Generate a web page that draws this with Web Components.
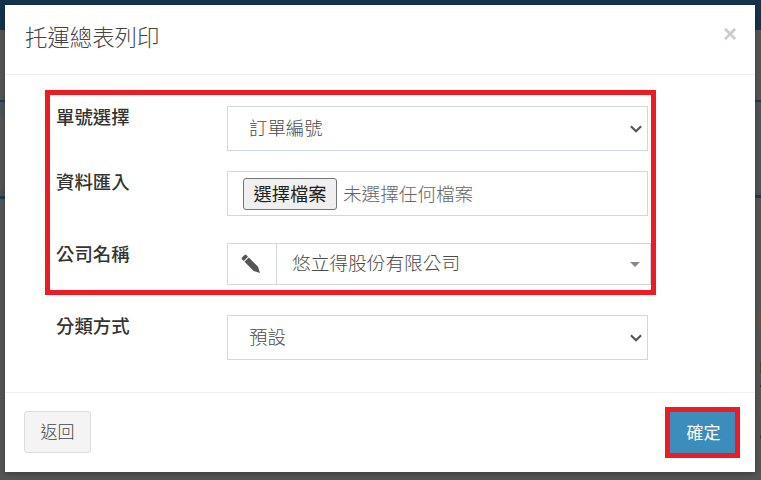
<!DOCTYPE html>
<html lang="zh-Hant"><head><meta charset="utf-8"><title>托運總表列印</title>
<style>
html,body{margin:0;height:100%;overflow:hidden}
body{font-family:"Noto Sans CJK TC","Liberation Sans",sans-serif;color:#333}
.r1{margin-top:20px}
.r2{margin-top:27px}
.r3{margin:20px 0 0 51px}
.first{margin-top:11px}
.back{margin-top:-1px}
</style></head><body>
<page-backdrop></page-backdrop>
<print-modal heading="托運總表列印">
  <red-frame class="main">
    <form-row class="first" label="單號選擇"><select-box>訂單編號</select-box></form-row>
    <form-row class="r1" label="資料匯入"><file-box></file-box></form-row>
    <form-row class="r2" label="公司名稱"><combo-box>悠立得股份有限公司</combo-box></form-row>
  </red-frame>
  <form-row class="r3" label="分類方式"><select-box>預設</select-box></form-row>
  <action-button class="back" slot="left">返回</action-button>
  <red-frame slot="right" style="--m:0;--p:0"><action-button primary>確定</action-button></red-frame>
</print-modal>
<script>
function def(name,css,html){
  customElements.define(name,class extends HTMLElement{
    constructor(){super();const s=this.attachShadow({mode:'open'});
      s.innerHTML='<style>'+css+'</style>'+(typeof html==='function'?html(this):html);}
  });
}
const chev='<svg width="12" height="8" viewBox="0 0 12 8"><path d="M.9 1.300 6 6.300 11.100 1.300" fill="none" stroke="#555" stroke-width="2.100"/></svg>';
def('page-backdrop',`
:host{position:fixed;inset:0;display:flex;background:#565656}
section{display:flex;flex-direction:column}
.lc{width:5px;flex:none}.rc{flex:1;position:relative}
div{flex:none}
.top{height:30px;background:#15344b}.a{height:70px}
.l{height:2px;background:#1c3d52}
.t{background:#4b5558}
.g{background:#515151}
.m{height:3px;background:#1c3d52}
.rest{flex:1}
i{position:absolute;right:0;width:1px}`,
`<section class="lc"><div class="top"></div><div class="a"></div><div class="l"></div><div class="t" style="height:14px"></div><div style="height:73px"></div><div class="g" style="height:7px"></div><div class="m"></div><div class="rest"></div></section>
<section class="rc"><div class="top"></div><div class="a"></div><div class="l"></div><div class="t" style="height:93px"></div><div class="m"></div><div class="rest"></div>
<i style="top:313px;height:12px;background:#6b5528"></i><i style="top:362px;height:11px;background:#4a4330"></i><i style="top:385px;height:2px;background:#333"></i><i style="top:435px;height:4px;background:#4a3d28"></i></section>`);
def('print-modal',`
:host{position:fixed;left:5px;top:5px;width:750px;height:467px;background:#fff;display:flex;flex-direction:column;box-shadow:0 2px 6px rgba(0,0,0,.3)}
header{height:70px;box-sizing:border-box;border-bottom:1px solid #f0f0f0;display:flex;justify-content:space-between;align-items:flex-start;padding:0 18px 0 20px;flex:none}
h1{margin:16px 0 0;font-size:22.400px;line-height:30px;font-weight:300;color:#444}
.x{font:bold 24px/24px "Liberation Sans",sans-serif;color:#ccc;margin-top:17px}
main{flex:1;min-height:0}
footer{flex:none;height:80px;box-sizing:border-box;border-top:1px solid #f0f0f0;display:flex;justify-content:space-between;align-items:center;padding:0 15px 0 19px}`,
h=>`<header><h1>${h.getAttribute('heading')}</h1><span class="x">×</span></header>
<main><slot></slot></main><footer><slot name="left"></slot><slot name="right"></slot></footer>`);
def('red-frame',`
:host{display:block;box-sizing:border-box;border:5px solid #ed1c24;margin:var(--m,15px 0 0 40px);padding:var(--p,0 0 5px 6px);width:fit-content;min-width:0}`,
`<slot></slot>`);
def('form-row',`
:host{display:grid;grid-template-columns:171px auto;align-items:start}
label{font-size:18.400px;line-height:22px;margin-top:-1px;font-weight:500;color:#333;white-space:nowrap}`,
h=>`<label>${h.getAttribute('label')}</label><slot></slot>`);
def('select-box',`
:host{display:flex;align-items:center;justify-content:space-between;box-sizing:border-box;width:421px;height:45px;border:1px solid #d2d6de;padding:0 5px 3px 21px;font-size:18.400px;font-weight:300;color:#4a4a4a}
svg{margin-top:3px}`,
`<span><slot></slot></span>${chev}`);
def('file-box',`
:host{display:flex;align-items:center;box-sizing:border-box;width:421px;height:45px;border:1px solid #d2d6de;padding:0 0 0 15px;font-size:18.600px;font-weight:300;color:#666}
b{font-weight:300;margin-bottom:2px}
span{box-sizing:border-box;height:32px;width:94px;border:1px solid #767676;border-radius:3px;background:#efefef;color:#222;font-size:18.200px;font-weight:400;padding-bottom:2px;display:flex;align-items:center;justify-content:center;margin-right:6px}`,
`<span>選擇檔案</span><b>未選擇任何檔案</b>`);
def('combo-box',`
:host{display:flex;box-sizing:border-box;width:424px;height:42px;border:1px solid #d2d6de;font-size:18.700px;font-weight:300;color:#4a4a4a;align-items:stretch}
.i{width:49px;flex:none;border-right:1px solid #d2d6de;display:flex;align-items:center;justify-content:center;padding-right:2px;box-sizing:border-box}
.v{flex:1;display:flex;align-items:center;justify-content:space-between;padding:0 10px 0 15px}
.v span{margin-bottom:5px}
.a{width:0;height:0;border:5px solid transparent;border-top-color:#888;border-bottom:0}`,
`<div class="i"><svg width="20" height="20" viewBox="0 0 20 20"><path fill="#555" d="M1 3.600 3.600 1c.5-.5 1.200-.5 1.700 0L7 2.700 2.700 7 1 5.300C.5 4.800.5 4.100 1 3.600Z"/><path fill="#555" d="M3.500 7.800 7.800 3.500 16.300 12 17 12.700 19 19 12.700 17 12 16.300Z"/></svg></div>
<div class="v"><span><slot></slot></span><i class="a"></i></div>`);
def('action-button',`
:host{display:flex;align-items:center;justify-content:center;box-sizing:border-box;width:67px;height:42px;border:1px solid #ddd;border-radius:3px;background:#f4f4f4;color:#444;font-size:17px;font-weight:300;padding-bottom:3px}
:host([primary]){width:65px;height:41px;border:0;border-radius:0;background:#3c8dbc;color:#fff;padding-left:2px;font-weight:400}`,
`<slot></slot>`);
</script>
</body></html>
